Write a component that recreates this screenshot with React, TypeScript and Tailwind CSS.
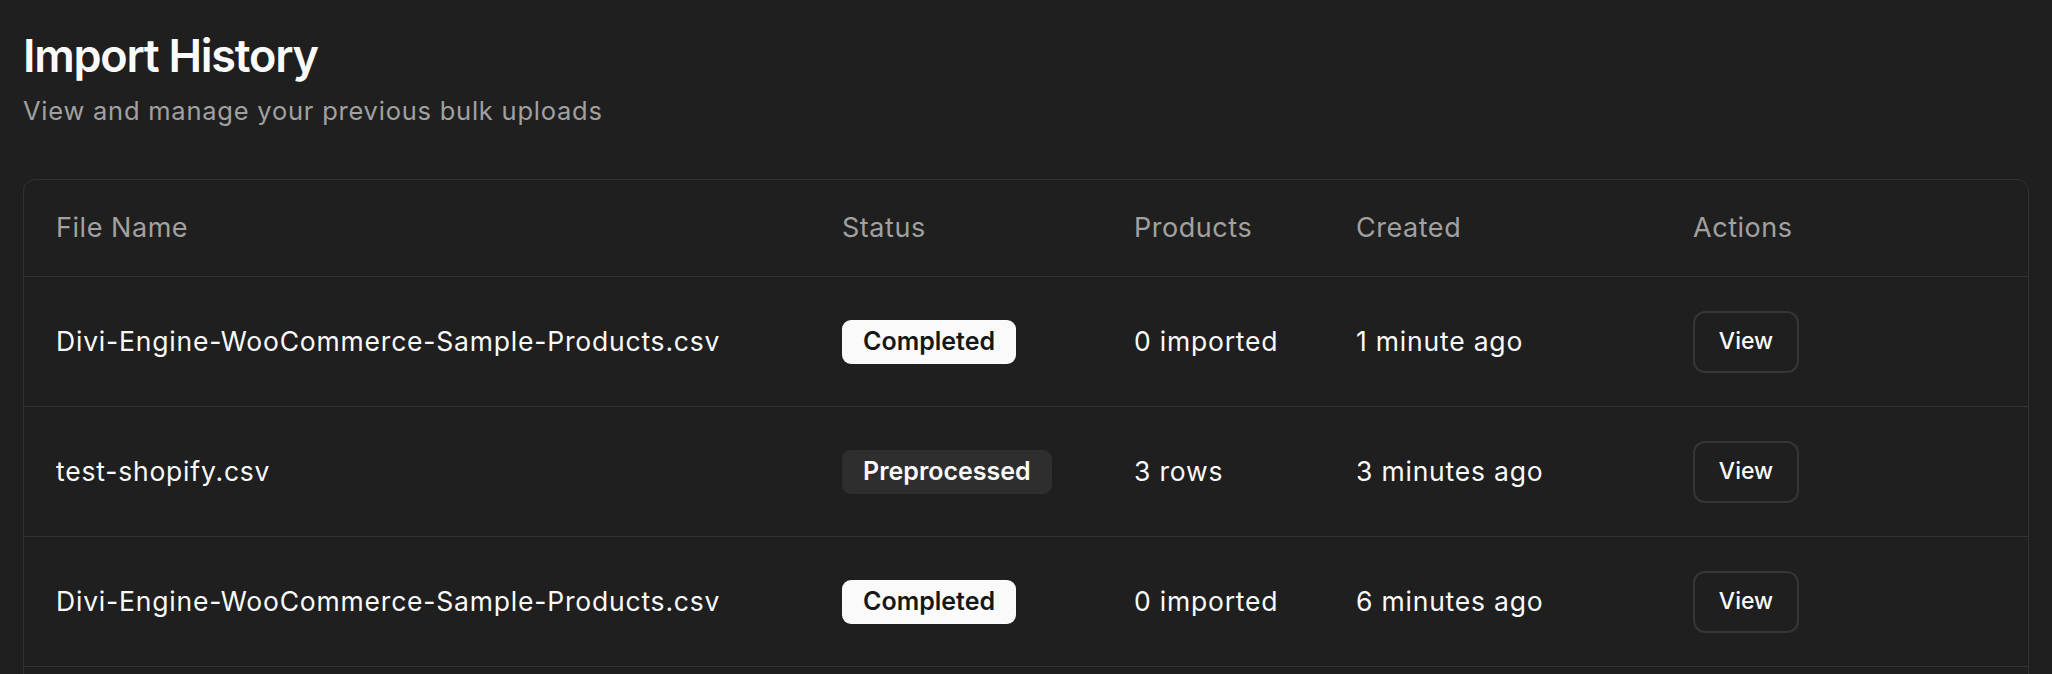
import React from 'react';

interface ImportRow {
  id: string;
  fileName: string;
  status: 'completed' | 'preprocessed';
  products: string;
  created: string;
}

const rows: ImportRow[] = [
  { id: '1', fileName: 'Divi-Engine-WooCommerce-Sample-Products.csv', status: 'completed', products: '0 imported', created: '1 minute ago' },
  { id: '2', fileName: 'test-shopify.csv', status: 'preprocessed', products: '3 rows', created: '3 minutes ago' },
  { id: '3', fileName: 'Divi-Engine-WooCommerce-Sample-Products.csv', status: 'completed', products: '0 imported', created: '6 minutes ago' },
  { id: '4', fileName: 'test-shopify.csv', status: 'preprocessed', products: '3 rows', created: '8 minutes ago' },
];

const gridCols = 'grid grid-cols-[786px_292px_222px_337px_1fr] items-center pl-8';

const StatusBadge: React.FC<{ status: ImportRow['status'] }> = ({ status }) => {
  if (status === 'completed') {
    return (
      <span className="inline-flex h-[44px] items-center rounded-[9px] bg-[#fafafa] px-[21px] text-[25px] font-semibold tracking-normal text-[#171717]">
        Completed
      </span>
    );
  }
  return (
    <span className="inline-flex h-[44px] items-center rounded-[9px] bg-[#2e2e2e] px-[21px] text-[25px] font-semibold tracking-normal text-[#fafafa]">
      Preprocessed
    </span>
  );
};

export default function App() {
  return (
    <div className="min-h-screen bg-[#1f1f1f] px-[23px] pt-[29px] font-['Inter',sans-serif] text-[#fafafa]">
      {/* Header */}
      <h1 className="text-[45px] leading-[54px] font-semibold tracking-[-0.028em]">Import History</h1>
      <p className="mt-[13px] text-[25.5px] leading-[30px] tracking-[0.03em] text-[#a1a1a1]">
        View and manage your previous bulk uploads
      </p>

      {/* Tabla */}
      <div className="mt-[53px] overflow-hidden rounded-[12px] border border-[#333333]">
        <div className={`${gridCols} h-[97px] border-b border-[#333333] text-[27px] tracking-[0.02em] text-[#a1a1a1]`}>
          <div>File Name</div>
          <div>Status</div>
          <div>Products</div>
          <div>Created</div>
          <div>Actions</div>
        </div>

        {rows.map((row) => (
          <div key={row.id} className={`${gridCols} h-[130px] border-b border-[#333333] text-[26.5px] tracking-[0.03em]`}>
            <div>{row.fileName}</div>
            <div>
              <StatusBadge status={row.status} />
            </div>
            <div>{row.products}</div>
            <div>{row.created}</div>
            <div>
              <button className="h-[62px] w-[106px] rounded-[12px] border-2 border-[#363636] text-[23px] font-medium tracking-normal">
                View
              </button>
            </div>
          </div>
        ))}
      </div>
    </div>
  );
}
